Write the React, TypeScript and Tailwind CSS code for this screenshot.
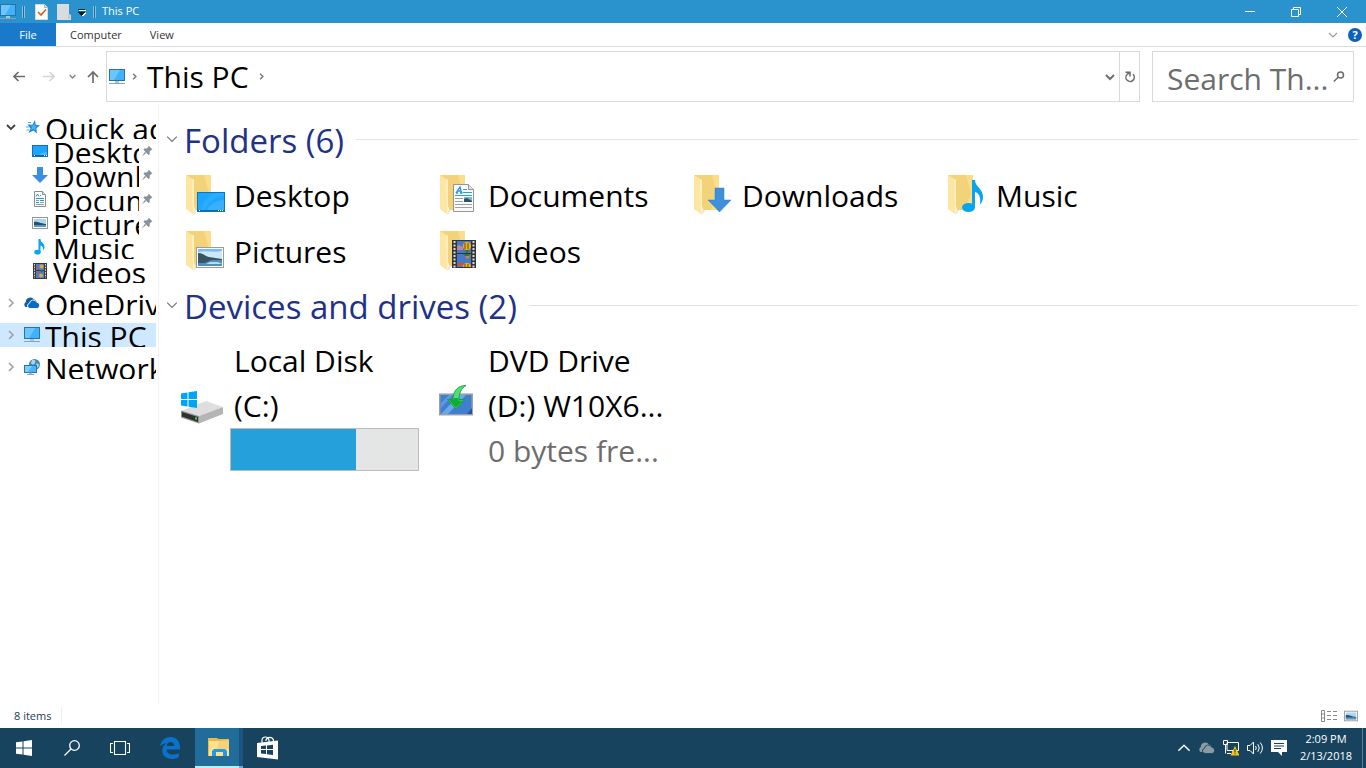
import type { ReactNode } from 'react';

type IconProps = { className?: string };

type TreeItem = {
  name: string;
  icon: ReactNode;
  pinned?: boolean;
};

function PcIcon({ className = 'h-4 w-4' }: IconProps) {
  return (
    <svg viewBox="0 0 16 16" className={className} aria-hidden="true">
      <rect x="0" y="0" width="16" height="12" fill="#2a72a8" />
      <rect x="1" y="1" width="14" height="10" fill="#3fb2fb" />
      <path d="M1 1h10L5 11H1z" fill="#6cc6fb" />
      <rect x="6" y="12" width="4" height="2" fill="#a9c6d8" />
      <rect x="0" y="14" width="16" height="1" fill="#8fa3af" />
    </svg>
  );
}

function Chevron({ dir, color, size = 10, stroke = 1.5 }: { dir: 'down' | 'right' | 'up'; color: string; size?: number; stroke?: number }) {
  const paths = {
    down: 'M1 3l4 4 4-4',
    right: 'M3 1l4 4-4 4',
    up: 'M1 7l4-4 4 4',
  };
  return (
    <svg viewBox="0 0 10 10" width={size} height={size} fill="none" stroke={color} strokeWidth={stroke} aria-hidden="true" className="shrink-0">
      <path d={paths[dir]} />
    </svg>
  );
}

function StarIcon() {
  return (
    <svg viewBox="0 0 16 16" className="h-4 w-4 shrink-0" aria-hidden="true">
      <path d="M11 1l.7 4.700L16 6.500l-3.600 2.800.6 5.200-3.600-3L4.500 14l2-4.700L3.500 5.400l5 .4z" fill="#1f86d2" />
      <path d="M10.200 4l.5 2.700 2.800.4-2.200 1.700.3 2.700-2.200-1.600-2.600 1.100 1.200-2.500-1.600-2 2.500.2z" fill="#45b2f7" />
      <path d="M4 3.500h3M2 8h3.500M2.500 11h2.500" stroke="#5aa9dd" strokeWidth="1" />
    </svg>
  );
}

function DesktopIcon() {
  return (
    <svg viewBox="0 0 16 16" className="h-4 w-4 shrink-0" aria-hidden="true">
      <rect x=".5" y="2.500" width="15" height="11" fill="#1ea5fb" stroke="#0f6fb8" />
      <path d="M15 3v6Q9 9 6 13h9z" fill="#4db8fc" />
      <path d="M1 12.500h14" stroke="#0c65a8" />
      <path d="M2 12.500h1M12 12.500h1M14 12.500h1" stroke="#fff" />
    </svg>
  );
}

function DownloadIcon() {
  return (
    <svg viewBox="0 0 16 16" className="h-4 w-4 shrink-0" aria-hidden="true">
      <path d="M5 0h6v8h5l-8 8-8-8h5z" fill="#3b8fdc" />
    </svg>
  );
}

function DocumentIcon() {
  return (
    <svg viewBox="0 0 16 16" className="h-4 w-4 shrink-0" aria-hidden="true">
      <path d="M2.500.5h8l3 3v12h-11z" fill="#fbfbfb" stroke="#8b8f92" />
      <path d="M10.500.5v3h3" fill="#ddd" stroke="#8b8f92" />
      <path d="M4 5.500l1.500-2.500L7 5.500M8 4.500h1M4 7.500h8M8 9.500h4M4 11.500h3" stroke="#2492dd" fill="none" />
      <path d="M4 9.500h3M8 11.500h4M4 13.500h8" stroke="#8b9daa" />
    </svg>
  );
}

function PictureIcon({ className = 'h-4 w-4 shrink-0' }: IconProps) {
  return (
    <svg viewBox="0 0 16 16" className={className} aria-hidden="true">
      <rect x=".5" y="2.500" width="15" height="11" fill="#fff" stroke="#969696" />
      <rect x="2" y="4" width="12" height="8" fill="#a8d8f5" />
      <path d="M2 7c3-1 5 1 12 2v1H2z" fill="#2b4d66" />
      <rect x="2" y="10" width="12" height="2" fill="#5b95c0" />
    </svg>
  );
}

function MusicIcon() {
  return (
    <svg viewBox="0 0 16 16" className="h-4 w-4 shrink-0" aria-hidden="true">
      <ellipse cx="5.500" cy="13.200" rx="3.200" ry="2.400" fill="#0aa5ee" />
      <path d="M6.500 0h2c0 4 4.500 4 4 8 0 1.500-.6 2.500-1.500 3.500.6-3-.5-4.500-2.500-5V13h-2z" fill="#0aa5ee" />
    </svg>
  );
}

function VideoIcon() {
  return (
    <svg viewBox="0 0 16 16" className="h-4 w-4 shrink-0" aria-hidden="true">
      <rect x="1" y="0" width="14" height="16" fill="#3a3a3a" />
      <path d="M2.500 1v14M13.500 1v14" stroke="#e6e6e6" strokeWidth="1" strokeDasharray="1.500 1.200" />
      <rect x="4" y="1" width="8" height="6" fill="#4a7fd0" />
      <rect x="4" y="8" width="8" height="7" fill="#4a7fd0" />
      <circle cx="9.500" cy="3.500" r="2" fill="#e5a823" />
      <circle cx="9" cy="12.500" r="2" fill="#e5a823" />
      <path d="M4 4h3v2H4zM5 9h3v1H5z" fill="#c55a3c" />
      <path d="M8 7h3l-1 3z" fill="#2f6b38" />
    </svg>
  );
}

function CloudIcon({ className, front, back, gap }: { className: string; front: string; back: string; gap: string }) {
  return (
    <svg viewBox="0 0 16 16" className={className} aria-hidden="true">
      <path d="M1.500 12A3 3 0 0 1 1.800 7 4.500 4.500 0 0 1 10 4.600a3.500 3.500 0 0 1 2.500 1.600L8 12z" fill={back} />
      <path d="M6 13.500a2.700 2.700 0 0 1-.5-5.300 3.800 3.800 0 0 1 7.200-1 3.200 3.200 0 0 1 .6 6.300z" fill={front} stroke={gap} strokeWidth=".9" />
    </svg>
  );
}

function NetworkIcon() {
  return (
    <svg viewBox="0 0 16 16" className="h-4 w-4 shrink-0" aria-hidden="true">
      <circle cx="10.500" cy="5.500" r="5.500" fill="#3f87b8" />
      <path d="M8 1c3-1 4 1 3 3S8 6 7 4zM12 5c2-1 3 0 3 2l-2 2z" fill="#a7d5ec" />
      <rect x=".5" y="6.500" width="12" height="7" fill="#49b5f8" stroke="#2974aa" />
      <path d="M1 7h7l-4 6H1z" fill="#7fcdfb" />
      <path d="M5 14.200h3M3 15.500h7" stroke="#8ea6b4" />
    </svg>
  );
}

function PinIcon() {
  return (
    <svg viewBox="0 0 12 12" className="h-3 w-3 shrink-0" aria-hidden="true">
      <path d="M7.500.5l4 4-1.200.4-1.700 1.900.2 2.400L7.500 10 2.400 4.800l1-1.400 2.300.2L7.300 2zM4 6.800l1.200 1.200L.8 11.400z" fill="#8a9299" />
    </svg>
  );
}

// half-open folder, the overlay is drawn in front of it
function Folder({ children }: { children: ReactNode }) {
  return (
    <svg viewBox="0 0 40 40" className="h-10 w-10 shrink-0" aria-hidden="true">
      <path d="M0 0h25v35H9z" fill="#f3d37a" />
      <path d="M18 0h7v35h-8l6-17z" fill="#fbdd8b" />
      <path d="M0 0l8 5v35l-8-6z" fill="#fde6a2" />
      <path d="M6 4l2 1v34l-1 1z" fill="#fff0c2" />
      <path d="M8 35h3l-2 4H8z" fill="#e8e8e8" />
      {children}
    </svg>
  );
}

const folders = [
  {
    name: 'Desktop',
    overlay: (
      <>
        <rect x="11.500" y="17.500" width="27" height="19" fill="#1da6ff" stroke="#1173b9" />
        <path d="M38 18v7c-9 1-15 5-17 10h17z" fill="#38b0fe" />
        <path d="M30 18h8v3c-8 0-16 6-19 14h-4c2-9 8-15 15-17z" fill="#2cacff" />
        <path d="M12 35.500h26" stroke="#0d6cae" />
        <path d="M13 35.500h1M32 35.500h1M34 35.500h1M36 35.500h1" stroke="#fff" />
      </>
    ),
  },
  {
    name: 'Documents',
    overlay: (
      <>
        <path d="M13.500 9.500h15l5 5v22h-20z" fill="#fafafa" stroke="#959595" />
        <path d="M28.500 9.500v5h5" fill="#e2e2e2" stroke="#959595" />
        <path d="M16 18l4-6 1.500 6M17.500 16h3M16 18h2M20 18h2.500" stroke="#2492dd" strokeWidth="1.300" fill="none" />
        <path d="M23 14.500h4M23 17.500h9M15 20.500h17" stroke="#2a9fe8" />
        <path d="M15 23.500h8M15 26.500h8M15 29.500h17M15 32.500h17" stroke="#a0a0a0" />
        <rect x="24" y="22" width="8" height="5" fill="#75b8e0" />
        <path d="M24 24l3-1 5 3v1h-8z" fill="#2f5068" />
      </>
    ),
  },
  { name: 'Downloads', overlay: <path d="M21 13h9v12h7L25.500 37 14 25h7z" fill="#3d90dc" stroke="#2f7fca" strokeWidth=".5" /> },
  {
    name: 'Music',
    overlay: (
      <>
        <ellipse cx="20.500" cy="32.500" rx="6.500" ry="4.500" fill="#07a4f0" />
        <path d="M24 5h3c0 7 9 9 8 18-.2 2.500-1.500 5-3 6.500C33 22 31 18 27 17v15h-3z" fill="#07a4f0" />
      </>
    ),
  },
  {
    name: 'Pictures',
    overlay: (
      <>
        <rect x="10.500" y="16.500" width="27" height="20" fill="#fff" stroke="#9b9b9b" />
        <rect x="12" y="18" width="24" height="17" fill="#78bdf0" />
        <path d="M12 21c8-2 16 1 24-1v8H12z" fill="#cde8f6" />
        <path d="M12 22c5 0 7 3 11 4l13 2v1l-10 1H12z" fill="#3a5562" />
        <path d="M12 29h24v6H12z" fill="#4d8fbd" />
        <path d="M12 29h14l-8 3h-6z" fill="#35566b" />
        <path d="M24 31h8l4 2H20z" fill="#b9dbea" />
      </>
    ),
  },
  {
    name: 'Videos',
    overlay: (
      <>
        <rect x="12" y="9" width="24" height="28" fill="#343434" />
        <path d="M14.500 10v27M33.500 10v27" stroke="#dadada" strokeWidth="2" strokeDasharray="2 1.500" />
        <rect x="17" y="10" width="14" height="12" fill="#4678cc" />
        <rect x="17" y="23" width="14" height="13" fill="#4678cc" />
        <path d="M17 15c2-2 4 0 6 1v3h-6z" fill="#b98a93" />
        <circle cx="27" cy="15" r="4" fill="#f0b41b" />
        <path d="M25 12v6M28 12v6" stroke="#77401a" />
        <path d="M25 19h4l-1 3h-2z" fill="#2f7a3b" />
        <path d="M24 23h7l-3 5h-1z" fill="#c98a2b" />
        <path d="M23 23h8l-2 2h-4z" fill="#2f7a3b" />
        <path d="M18 32h5v3h-5z" fill="#d0542e" />
        <path d="M23 36a4 4 0 0 1 8 0z" fill="#f0b41b" />
        <path d="M25 33v3M28 33v3" stroke="#77401a" />
      </>
    ),
  },
];

const quickAccess: TreeItem[] = [
  { name: 'Desktop', icon: <DesktopIcon />, pinned: true },
  { name: 'Downloads', icon: <DownloadIcon />, pinned: true },
  { name: 'Documents', icon: <DocumentIcon />, pinned: true },
  { name: 'Pictures', icon: <PictureIcon />, pinned: true },
  { name: 'Music', icon: <MusicIcon /> },
  { name: 'Videos', icon: <VideoIcon /> },
];

const roots = [
  { name: 'OneDrive', icon: <CloudIcon className="h-4 w-4 shrink-0" front="#0a6abf" back="#0a5fae" gap="#fff" /> },
  { name: 'This PC', icon: <PcIcon className="h-4 w-4 shrink-0" />, selected: true },
  { name: 'Network', icon: <NetworkIcon /> },
];

function TitleBar() {
  return (
    <header className="flex h-[23px] items-center bg-[#2a93ce] text-white">
      <PcIcon />
      <span className="ml-[6px] h-3 w-[3px] border-x border-[#8ebfdc] bg-[#1d6d9b]" />
      <button aria-label="Properties" className="ml-[10px]">
        <svg viewBox="0 0 13 16" className="h-4 w-[13px]">
          <path d="M.5.5h9l3 3v12H.5z" fill="#fff" stroke="#d6dde1" />
          <path d="M9.500.5v3h3" fill="#ddd" stroke="#9fb4bf" />
          <path d="M3 8l3 3 5-5.500" stroke="#d2622a" strokeWidth="1.700" fill="none" />
        </svg>
      </button>
      <button aria-label="New folder" className="ml-[9px]">
        <svg viewBox="0 0 14 16" className="h-4 w-[14px]">
          <path d="M0 0h12v10l2 1v5H0z" fill="#d9dcde" />
          <path d="M11 10l2 1v4h-2z" fill="#c3c9cc" />
        </svg>
      </button>
      <button aria-label="Customize Quick Access Toolbar" className="ml-[7px]">
        <svg viewBox="0 0 8 8" className="h-2 w-2">
          <path d="M1 2.500h7M2 5h6L5 8z" fill="#fff" stroke="#fff" />
          <path d="M0 1.500h7M0 4h7L3.500 7.500z" fill="#0a1a24" stroke="#0a1a24" strokeWidth=".8" />
        </svg>
      </button>
      <span className="ml-[7px] h-3 w-[3px] border-x border-[#8ebfdc] bg-[#1d6d9b]" />
      <h1 className="ml-[6px] flex-1 text-[11px]">This PC</h1>
      <button aria-label="Minimize" className="flex h-full w-[46px] items-center justify-center">
        <svg viewBox="0 0 10 10" className="h-[10px] w-[10px]" stroke="#fff">
          <path d="M0 4.500h10" />
        </svg>
      </button>
      <button aria-label="Restore" className="flex h-full w-[45px] items-center justify-center">
        <svg viewBox="0 0 10 10" className="h-[10px] w-[10px]" stroke="#fff" fill="none">
          <path d="M.5 2.500h7v7h-7zM2.500 2.500v-2h7v7h-2" />
        </svg>
      </button>
      <button aria-label="Close" className="flex h-full w-12 items-center justify-center">
        <svg viewBox="0 0 10 10" className="h-[10px] w-[10px]" stroke="#fff">
          <path d="M0 0l10 10M10 0L0 10" />
        </svg>
      </button>
    </header>
  );
}

function Ribbon() {
  return (
    <nav className="flex h-6 items-center border-b border-[#dadbdc] text-[11px] text-[#333]">
      <button className="h-full w-14 bg-[#1979ca] pt-[1px] text-white">File</button>
      <button className="ml-[14px] pt-[1px]">Computer</button>
      <button className="ml-[28px] pt-[1px]">View</button>
      <span className="flex-1" />
      <button aria-label="Expand the Ribbon">
        <Chevron dir="down" color="#9a9a9a" stroke={1.2} />
      </button>
      <button aria-label="Help" className="mr-1 ml-[10px] flex h-[14px] w-[14px] items-center justify-center rounded-full bg-[#0a63b8] text-[11px] font-bold leading-none text-white">
        ?
      </button>
    </nav>
  );
}

function AddressBar() {
  return (
    <div className="flex h-[59px] items-center pr-3">
      <div className="flex w-[106px] shrink-0 items-center pl-[13px]">
        <button aria-label="Back">
          <svg viewBox="0 0 12 12" className="h-3 w-3" fill="none" stroke="#6b6b6b" strokeWidth="1.600">
            <path d="M12 5.500H1M5.500 1L1 5.500 5.500 10" />
          </svg>
        </button>
        <button aria-label="Forward" className="ml-[18px]">
          <svg viewBox="0 0 12 12" className="h-3 w-3" fill="none" stroke="#d4d4d4" strokeWidth="1.600">
            <path d="M0 5.500h11M6.500 1L11 5.500 6.500 10" />
          </svg>
        </button>
        <button aria-label="Recent locations" className="ml-[14px]">
          <Chevron dir="down" color="#808080" size={7} stroke={2} />
        </button>
        <button aria-label="Up" className="ml-[11px]">
          <svg viewBox="0 0 12 12" className="h-3 w-3" fill="none" stroke="#6b6b6b" strokeWidth="1.700">
            <path d="M6 12V1M1 6l5-5 5 5" />
          </svg>
        </button>
      </div>
      <div className="flex h-[51px] flex-1 items-center border border-[#d9d9d9]">
        <span className="ml-[2px]">
          <PcIcon />
        </span>
        <span className="ml-[6px]">
          <Chevron dir="right" color="#777" size={7} stroke={2} />
        </span>
        <a href="#this-pc" className="ml-[9px] text-[30px] leading-[45px] text-black">This PC</a>
        <span className="ml-[9px] flex-1">
          <Chevron dir="right" color="#777" size={7} stroke={2} />
        </span>
        <button aria-label="Previous locations" className="mr-[4px]">
          <Chevron dir="down" color="#707070" stroke={2} />
        </button>
        <button aria-label="Refresh" className="flex h-full w-5 items-center justify-center border-l border-[#d9d9d9]">
          <svg viewBox="0 0 12 12" className="h-3 w-3" fill="none" stroke="#6b6b6b" strokeWidth="1.500">
            <path d="M9 3.200A4.200 4.200 0 1 1 3 3.400L5.500 2" />
            <path d="M1.500 1.200H6V5.500" />
          </svg>
        </button>
      </div>
      <label className="ml-3 flex h-[51px] w-[202px] items-center border border-[#d9d9d9] pl-[14px]">
        <input
          type="text"
          aria-label="Search This PC"
          placeholder="Search Th..."
          className="h-[49px] w-[166px] bg-transparent pt-[3px] text-[30px] text-black outline-none placeholder:text-[#6d6d6d]"
        />
        <svg viewBox="0 0 12 12" className="h-3 w-3" fill="none" stroke="#6b6b6b" strokeWidth="1.500">
          <circle cx="7.500" cy="4" r="3" />
          <path d="M5.200 6.200L.8 10.500" />
        </svg>
      </label>
    </div>
  );
}

function Sidebar() {
  return (
    <aside className="w-[159px] shrink-0 border-r border-[#f3f3f3] pt-[9px] pr-[2px] text-[30px] leading-7 text-black">
      <a href="#quick-access" className="flex h-6 items-center overflow-hidden">
        <span className="flex w-6 shrink-0 pl-[6px]">
          <Chevron dir="down" color="#404040" stroke={1.8} />
        </span>
        <StarIcon />
        <span className="ml-[5px] h-6 flex-1 overflow-hidden whitespace-nowrap">Quick access</span>
      </a>
      <ul>
        {quickAccess.map((item) => (
          <li key={item.name}>
            <a href={`#${item.name}`} className="flex h-6 items-center pl-8">
              {item.icon}
              <span className="ml-[5px] h-6 flex-1 overflow-hidden whitespace-nowrap">{item.name}</span>
              {item.pinned && (
                <span className="mr-[3px] ml-[2px]">
                  <PinIcon />
                </span>
              )}
            </a>
          </li>
        ))}
      </ul>
      <ul className="mt-2 flex flex-col gap-2">
        {roots.map((item) => (
          <li key={item.name} className={item.selected ? 'bg-[#cde8ff]' : ''}>
            <a href={`#${item.name}`} className="flex h-6 items-center overflow-hidden">
              <span className="flex w-6 shrink-0 pl-[6px]">
                <Chevron dir="right" color="#a0a0a0" stroke={1.6} />
              </span>
              {item.icon}
              <span className="ml-[5px] h-6 flex-1 overflow-hidden whitespace-nowrap">{item.name}</span>
            </a>
          </li>
        ))}
      </ul>
    </aside>
  );
}

function GroupHeader({ title }: { title: string }) {
  return (
    <div className="flex h-[52px] items-center pr-2">
      <button aria-label={`Collapse ${title}`} className="mr-[6px] ml-[7px]">
        <Chevron dir="down" color="#777" size={12} stroke={1} />
      </button>
      <h2 className="pt-[3px] text-[33px] leading-[49px] whitespace-nowrap text-[#1e3287]">{title}</h2>
      <span className="ml-3 h-px flex-1 bg-[#e2e2e2]" />
    </div>
  );
}

function DiskIcon() {
  return (
    <svg viewBox="0 0 42 33" className="mt-[6px] h-[33px] w-[42px] shrink-0" aria-hidden="true">
      <path d="M0 20l25-10 17 6-24 9z" fill="#dedede" />
      <path d="M18 25l24-9v7l-24 9.500z" fill="#b5b5b5" />
      <path d="M0 19.500l18 5.500v7.500L0 26.500z" fill="#8f8f8f" />
      <path d="M1 21l16 5v5L1 25.500z" fill="#2f3130" />
      <rect x="14" y="26.500" width="2" height="2" fill="#37e063" />
      <path d="M0 2.500l6.500-1V8H0zM7.500 1.300L16 0v8H7.500zM0 9h6.500v6.500l-6.500-1zM7.500 9H16v8l-8.500-1.300z" fill="#00a5f5" />
    </svg>
  );
}

function DvdIcon() {
  return (
    <svg viewBox="0 0 34 31" className="mb-[10px] h-[31px] w-[34px] shrink-0" aria-hidden="true">
      <rect x=".7" y="9.200" width="32.500" height="20.500" fill="#3f7fd0" stroke="#9aa0a5" strokeWidth="1.500" />
      <path d="M2 29L20 10h7L9 29z" fill="#6aa8ec" />
      <path d="M2 18l8-8h4L2 23z" fill="#5b99e2" />
      <path d="M28 29l5-6v6z" fill="#28549c" />
      <path d="M27 .5c-8 0-13 5-13 14H8.500L17 24l8.500-9.500H20c0-6 2-11 7-14z" fill="#4be070" stroke="#17903a" strokeWidth=".8" />
      <path d="M10 15h4.500v-2h5v2.500H24L17 23z" fill="#10ac37" />
    </svg>
  );
}

function FileView() {
  return (
    <main className="min-w-0 flex-1 pt-[7px]">
      <section>
        <GroupHeader title="Folders (6)" />
        <ul className="grid grid-cols-[repeat(auto-fill,254px)] pt-[2px] pl-[22px]">
          {folders.map((folder) => (
            <li key={folder.name}>
              <a href={`#${folder.name}`} className="flex h-14 items-center gap-2 pl-[5px] text-[30px] leading-[45px] text-black">
                <Folder>{folder.overlay}</Folder>
                {folder.name}
              </a>
            </li>
          ))}
        </ul>
      </section>
      <section>
        <GroupHeader title="Devices and drives (2)" />
        <ul className="grid grid-cols-[repeat(auto-fill,254px)] pt-[7px] pl-[22px] text-[30px] leading-[45px] text-black">
          <li>
            <a href="#c" className="flex items-center">
              <DiskIcon />
              <span className="flex flex-col pl-[7px]">
                <span className="pl-1">Local Disk</span>
                <span className="pl-1">(C:)</span>
                <span className="flex h-[43px] w-[189px] border border-[#bcbcbc] bg-[#e4e5e5]">
                  <span className="bg-[#26a0da]" style={{ width: '67%' }} />
                </span>
              </span>
            </a>
          </li>
          <li>
            <a href="#d" className="flex items-center pl-1">
              <DvdIcon />
              <span className="flex flex-col pl-[15px] whitespace-nowrap">
                <span>DVD Drive</span>
                <span>(D:) W10X6...</span>
                <span className="text-[#6d6d6d]">0 bytes fre...</span>
              </span>
            </a>
          </li>
        </ul>
      </section>
    </main>
  );
}

function StatusBar() {
  return (
    <footer className="flex h-6 items-center pr-2 pl-[14px] text-[11px] text-[#1e395b]">
      <span className="border-r border-[#f0f0f0] pt-[1px] pr-[10px]">8 items</span>
      <span className="flex-1" />
      <button aria-label="Details view">
        <svg viewBox="0 0 16 12" className="h-3 w-4" fill="none" stroke="#8a8a8a">
          <path d="M.5.5h3v11h-3zM.5 4h3M.5 8h3M6 1.500h4M12 1.500h4M6 5.500h4M12 5.500h4M6 9.500h4M12 9.500h4" />
        </svg>
      </button>
      <button aria-label="Large icons view" className="ml-[7px]">
        <PictureIcon className="h-4 w-[14px]" />
      </button>
    </footer>
  );
}

function Taskbar() {
  return (
    <footer className="flex h-10 items-stretch bg-[#17435e] text-white">
      <button aria-label="Start" className="flex w-12 items-center justify-center">
        <svg viewBox="0 0 16 16" className="h-4 w-4" fill="#fff">
          <path d="M0 2.300l6.500-.9v6.100H0zM7.500 1.200L16 0v7.500H7.500zM0 8.500h6.500v6.100L0 13.700zM7.500 8.500H16V16l-8.500-1.200z" />
        </svg>
      </button>
      <button aria-label="Search" className="flex w-12 items-center justify-center">
        <svg viewBox="0 0 16 16" className="h-4 w-4" fill="none" stroke="#fff" strokeWidth="1.300">
          <circle cx="10.500" cy="5.500" r="4.800" />
          <path d="M7 9L.5 15.500" />
        </svg>
      </button>
      <button aria-label="Task View" className="flex w-12 items-center justify-center">
        <svg viewBox="0 0 20 14" className="h-[14px] w-5" fill="none" stroke="#fff" strokeWidth="1.100">
          <path d="M4.500.5h11v13h-11zM3 2.500H.5v9H3M17 2.500h2.500v9H17" />
        </svg>
      </button>
      <button aria-label="Microsoft Edge" className="flex w-[51px] items-center justify-center">
        <svg viewBox="0 0 20 22" className="h-[22px] w-5">
          <path d="M0 9.500C.8 4 4.800 0 10.500 0 16.500 0 20 4.300 20 10v2.500H6.500c.2 3.600 3 5 6.300 5 2.200 0 4.200-.6 6-1.600v4.300c-2 1.200-4.500 1.800-7 1.800C6 22 2.300 18.700 2.300 13.600c0-3.300 1.700-6 4.400-7.400-3 .2-5.200 1.500-6.700 3.300zM6.700 9h7.500c0-2.500-1.300-3.900-3.500-3.900-2.100 0-3.700 1.500-4 3.900z" fill="#0a72c9" />
        </svg>
      </button>
      <button aria-label="File Explorer" className="flex w-12 items-stretch bg-[#1a5580]">
        <span className="flex w-11 items-center justify-center border-b-2 border-[#b3effc] bg-[#226c99] pl-1">
          <svg viewBox="0 0 22 18" className="h-[18px] w-[22px]">
            <path d="M0 0h9l1.500 1H21v17H0z" fill="#eab94e" />
            <path d="M1 3h20v15H1z" fill="#ffe08c" />
            <path d="M11 3l10-1v9H9z" fill="#f8d077" />
            <path d="M4 18v-5l2-2h11l2 2v5h-4v-4H8v4z" fill="#1b9bea" />
          </svg>
        </span>
        <span className="w-1 border-b-2 border-[#7ba6cc]" />
      </button>
      <button aria-label="Store" className="flex w-12 items-center justify-center pl-[1px]">
        <svg viewBox="0 0 22 24" className="h-6 w-[22px]">
          <path d="M5 7V4.500a3.500 3.500 0 0 1 7 0V6M9 5V4a4 4 0 0 1 7.500 0V6" fill="none" stroke="#fff" strokeWidth="1.200" />
          <path d="M0 7l21-2.500v19L0 21z" fill="#fff" />
          <path d="M4 10l5-.5V13H4zM10 9.400l6-.7V13h-6zM4 14h5v4l-5-.5zM10 14h6v5l-6-.8z" fill="#17435e" />
        </svg>
      </button>
      <span className="flex-1" />
      <button aria-label="Show hidden icons" className="w-4 pl-[1px]">
        <Chevron dir="up" color="#fff" size={14} stroke={1} />
      </button>
      <button aria-label="OneDrive" className="ml-[7px]">
        <CloudIcon className="h-4 w-4" front="#8c9aa3" back="#8c9aa3" gap="#17435e" />
      </button>
      <button aria-label="Network" className="ml-2">
        <svg viewBox="0 0 16 16" className="h-4 w-4" fill="none" stroke="#fff">
          <path d="M4 2.500h11.500v8H4zM.5.500h4v4h-4zM2.500 4.500v9M4 13.500h4M10 11v2" />
          <path d="M12 6l4.500 9.500h-9z" fill="#f6c61e" stroke="none" />
          <path d="M12 9v3.500M12 13.300v1" stroke="#40350b" />
        </svg>
      </button>
      <button aria-label="Volume" className="ml-2">
        <svg viewBox="0 0 17 14" className="h-[14px] w-[17px]" fill="none" stroke="#fff">
          <path d="M.5 4.500h2.500L6.500 1v12L3 9.500H.500zM8.500 5q1.500 2 0 4M10.800 3.200q3 3.800 0 7.600M13.200 1.500q4.500 5.500 0 11" />
        </svg>
      </button>
      <button aria-label="Action Center" className="ml-[7px]">
        <svg viewBox="0 0 16 16" className="h-4 w-4">
          <path d="M0 0h16v12h-5v4l-4-4H0z" fill="#fff" />
          <path d="M3 3.500h10M3 6h10M3 8.500h7" stroke="#17435e" />
        </svg>
      </button>
      <button className="ml-[10px] w-[58px] pb-[2px] text-center text-[11px] leading-[17px]">
        <span className="block">2:09 PM</span>
        <span className="block">2/13/2018</span>
      </button>
      <button aria-label="Show desktop" className="ml-[7px] w-1 border-l border-[#5b7c90]" />
    </footer>
  );
}

export default function App() {
  return (
    <div className="flex min-h-screen flex-col bg-white font-['Open_Sans','Noto_Sans',sans-serif]">
      <TitleBar />
      <Ribbon />
      <AddressBar />
      <div className="flex flex-1">
        <Sidebar />
        <FileView />
      </div>
      <StatusBar />
      <Taskbar />
    </div>
  );
}
